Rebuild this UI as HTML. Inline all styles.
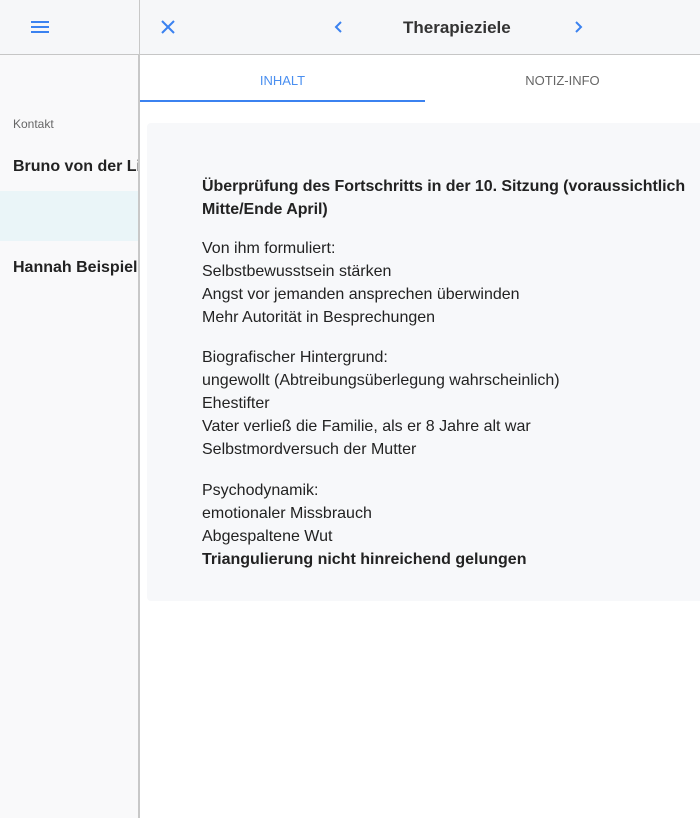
<!DOCTYPE html>
<html><head><meta charset="utf-8"><style>
*{margin:0;padding:0;box-sizing:border-box}
body{width:700px;height:818px;overflow:hidden;font-family:"Liberation Sans",sans-serif;background:#fff;position:relative;color:#222}
.side{position:absolute;left:0;top:0;width:139px;height:818px;background:#f9f9fa;border-right:1px solid #c8c8c8;overflow:hidden}
.hdr{position:absolute;left:0;top:0;width:700px;height:55px;background:#f6f7f9;border-bottom:1px solid #c6c6c6}
.vline{position:absolute;left:139px;top:0;width:1px;height:818px;background:#c8c8c8}
.ab{position:absolute;white-space:nowrap}
.card{position:absolute;left:147px;top:123px;width:560px;height:478px;background:#f7f8fa;border-radius:4px}
.t{position:absolute;left:202px;font-size:16px;line-height:23px;white-space:nowrap;color:#222}
</style></head><body>
<div class="side">
 <div class="ab" style="left:13px;top:117px;font-size:12px;color:#666">Kontakt</div>
 <div class="ab" style="left:13px;top:158px;font-size:16px;font-weight:bold;color:#222">Bruno von der Linde</div>
 <div class="ab" style="left:0;top:191px;width:139px;height:50px;background:#eaf5f8"></div>
 <div class="ab" style="left:13px;top:259px;font-size:16px;font-weight:bold;color:#222">Hannah Beispiel</div>
</div>
<div class="hdr"></div>
<div class="vline"></div>
<svg class="ab" style="left:30px;top:19px" width="20" height="16"><g stroke="#3b82f0" stroke-width="2"><line x1="1" y1="3" x2="19" y2="3"/><line x1="1" y1="8" x2="19" y2="8"/><line x1="1" y1="13" x2="19" y2="13"/></g></svg>
<svg class="ab" style="left:160px;top:19px" width="16" height="16"><g stroke="#3b82f0" stroke-width="2"><line x1="2" y1="2" x2="14" y2="14"/><line x1="14" y1="2" x2="2" y2="14"/></g></svg>
<svg class="ab" style="left:333px;top:20px" width="12" height="14"><path d="M8 2 L3 7 L8 12" stroke="#3b82f0" stroke-width="2" fill="none"/></svg>
<div class="ab" style="left:403px;top:18px;font-size:17px;font-weight:bold;color:#333">Therapieziele</div>
<svg class="ab" style="left:572px;top:20px" width="12" height="14"><path d="M4 2 L9 7 L4 12" stroke="#3b82f0" stroke-width="2" fill="none"/></svg>
<div class="ab" style="left:140px;top:73px;width:285px;text-align:center;font-size:13px;color:#4a8ff0">INHALT</div>
<div class="ab" style="left:425px;top:73px;width:275px;text-align:center;font-size:13px;color:#666">NOTIZ-INFO</div>
<div class="ab" style="left:140px;top:100px;width:285px;height:2px;background:#3b82f0"></div>
<div class="card"></div>
<div class="t" style="top:175px;font-weight:bold;letter-spacing:-0.05px">Überprüfung des Fortschritts in der 10. Sitzung (voraussichtlich<br>Mitte/Ende April)</div>
<div class="t" style="top:237px">Von ihm formuliert:<br>Selbstbewusstsein stärken<br>Angst vor jemanden ansprechen überwinden<br>Mehr Autorität in Besprechungen</div>
<div class="t" style="top:346px">Biografischer Hintergrund:<br>ungewollt (Abtreibungsüberlegung wahrscheinlich)<br>Ehestifter<br>Vater verließ die Familie, als er 8 Jahre alt war<br>Selbstmordversuch der Mutter</div>
<div class="t" style="top:479px">Psychodynamik:<br>emotionaler Missbrauch<br>Abgespaltene Wut<br><b>Triangulierung nicht hinreichend gelungen</b></div>
</body></html>
